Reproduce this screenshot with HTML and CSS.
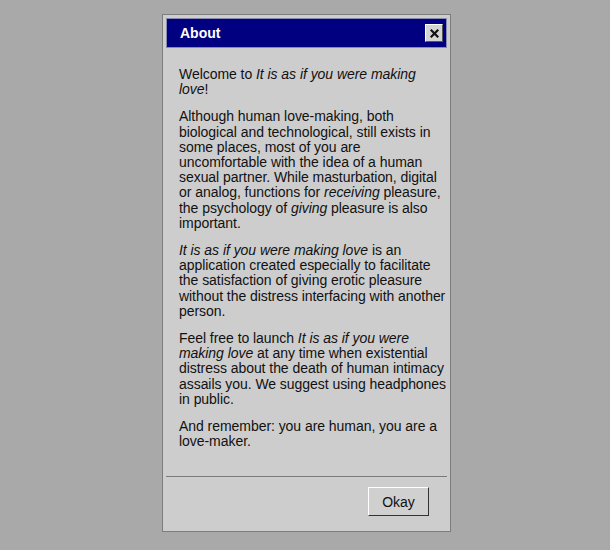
FILE: index.html
```html
<!DOCTYPE html>
<html>
<head>
<meta charset="utf-8">
<link rel="stylesheet" href="styles.css">
</head>
<body>
<div class="window">
  <div class="titlebar">
    <span class="title">About</span>
    <button class="close" aria-label="Close">
      <svg width="9" height="9" viewBox="0 0 9 9"><path d="M1.5 1.5 L7.5 7.5 M7.5 1.5 L1.5 7.5" stroke="#111" stroke-width="2.2" stroke-linecap="square"/></svg>
    </button>
  </div>
  <div class="content">
    <p>Welcome to <em>It is as if you were making</em><br><em>love</em>!</p>
    <p>Although human love-making, both<br>biological and technological, still exists in<br>some places, most of you are<br>uncomfortable with the idea of a human<br>sexual partner. While masturbation, digital<br>or analog, functions for <em>receiving</em> pleasure,<br>the psychology of <em>giving</em> pleasure is also<br>important.</p>
    <p><em>It is as if you were making love</em> is an<br>application created especially to facilitate<br>the satisfaction of giving erotic pleasure<br>without the distress interfacing with another<br>person.</p>
    <p>Feel free to launch <em>It is as if you were</em><br><em>making love</em> at any time when existential<br>distress about the death of human intimacy<br>assails you. We suggest using headphones<br>in public.</p>
    <p>And remember: you are human, you are a<br>love-maker.</p>
  </div>
  <div class="footer">
    <button class="okay">Okay</button>
  </div>
</div>
</body>
</html>
```
FILE: styles.css
```css
html, body {
  margin: 0;
  padding: 0;
  background: #a9a9a9;
  font-family: "Liberation Sans", Arial, sans-serif;
}
body {
  padding: 14px 0 0 162px;
}
.window {
  width: 287px;
  height: 516px;
  background: #cdcdcd;
  border: 1px solid #7d7d7d;
  display: flex;
  flex-direction: column;
}
.titlebar {
  margin: 3px 3px 0 3px;
  height: 28px;
  background: #000080;
  border: 1px solid #8a8ab0;
  display: flex;
  align-items: center;
  justify-content: space-between;
  padding: 0 3px 0 13px;
}
.title {
  color: #fff;
  font-weight: bold;
  font-size: 14px;
}
.close {
  width: 18px;
  height: 18px;
  padding: 0;
  background: #d4d4d4;
  border: 1px solid;
  border-color: #fff #555 #555 #fff;
  display: flex;
  align-items: center;
  justify-content: center;
}
.content {
  flex: 1;
  padding: 19px 0 0 16px;
  font-size: 14px;
  letter-spacing: -0.05px;
  line-height: 15.2px;
  color: #111;
  white-space: nowrap;
}
.content p {
  margin: 0 0 12px 0;
}
.footer {
  border-top: 1px solid #7a7a7a;
  margin: 0 3px;
  height: 55px;
  display: flex;
  justify-content: flex-end;
  align-items: flex-start;
  padding: 10px 18px 0 0;
  box-sizing: border-box;
}
.okay {
  width: 61px;
  height: 29px;
  font-family: "Liberation Sans", Arial, sans-serif;
  font-size: 14px;
  color: #111;
  background: #d0d0d0;
  border: 1px solid;
  border-color: #fff #333 #333 #fff;
  padding: 0;
}
```
